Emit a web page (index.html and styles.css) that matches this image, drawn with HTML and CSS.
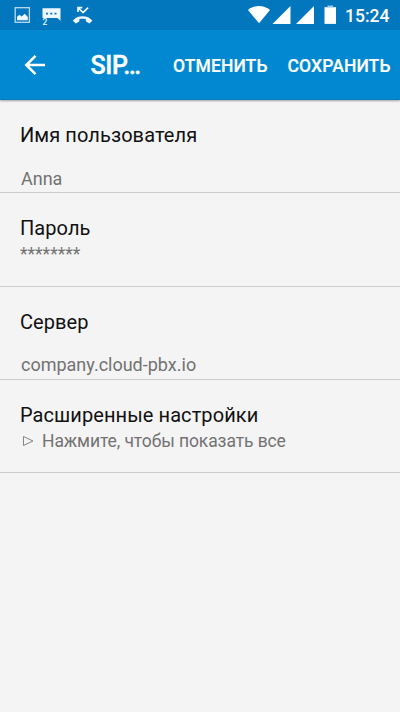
FILE: index.html
```html
<!DOCTYPE html>
<html lang="ru">
<head>
<meta charset="utf-8">
<title>SIP</title>
<link rel="stylesheet" href="styles.css">
</head>
<body>
<div class="statusbar">
  <svg class="notifications" width="110" height="30" viewBox="0 0 110 30" fill="#eef7fc">
    <rect x="15.200" y="7.700" width="14.200" height="14.600" fill="none" stroke="#b9dbf0" stroke-width="1.300"/>
    <path d="M17 20.300v-3.500l2.500-2 2.100 1.700 3.200-2.700 3 3.200v3.300z"/>
    <path fill-rule="evenodd" d="M42.500 8.200h18v12.500l-3.200-2.700H42.500zM46 12.800v1.800h1.900v-1.800zM50.300 12.800v1.800h1.900v-1.800zM54.600 12.800v1.800h1.900v-1.800z"/>
    <text x="42.500" y="25.200" class="badge">2</text>
    <path d="M72.800 20.700c2.500-2.900 5.700-4.400 9.800-4.400s7.300 1.500 9.800 4.400l-3 2.900-3.500-2v-2.300c-2.100-.6-4.500-.6-6.600 0v2.300l-3.500 2z"/>
    <path d="M78 12V7.700h4.300M78.300 8l4.800 4.600 5-5" fill="none" stroke="#eef7fc" stroke-width="1.700"/>
  </svg>
  <div class="system">
    <svg width="92" height="30" viewBox="0 0 92 30" fill="#fff">
      <path d="M0 10C6.500 4.700 15.500 4.700 22 10L11 23.300z"/>
      <path d="M42.500 6v18h-18z"/>
      <path d="M66 6v18H48z"/>
      <path d="M76.500 7.200H88v16.700H76.500z"/>
      <path fill="#9bcbea" d="M79.500 5.500h5.500v1.700h-5.500z"/>
    </svg>
    <span class="clock">15:24</span>
  </div>
</div>
<header class="appbar">
  <svg class="back" width="22" height="22" viewBox="0 0 22 22" fill="none" stroke="#fff" stroke-width="2.500"><path d="M21 11H3M11.500 1.800L2.300 11l9.200 9.200"/></svg>
  <h1 class="title">SIP…</h1>
  <span class="action cancel">ОТМЕНИТЬ</span>
  <span class="action">СОХРАНИТЬ</span>
</header>
<main class="settings">
  <section class="item">
    <div class="label">Имя пользователя</div>
    <div class="value field">Anna</div>
  </section>
  <section class="item">
    <div class="label">Пароль</div>
    <div class="value">********</div>
  </section>
  <section class="item">
    <div class="label lower">Сервер</div>
    <div class="value field">company.cloud-pbx.io</div>
  </section>
  <section class="item last">
    <div class="label">Расширенные настройки</div>
    <div class="value expand"><svg width="14" height="14" viewBox="0 0 14 14" fill="none" stroke="#858585" stroke-width="1"><path d="M1.500 2.500v9L11 7z"/></svg>Нажмите, чтобы показать все</div>
  </section>
</main>
</body>
</html>
```
FILE: styles.css
```css
* { box-sizing: border-box; }
body {
  margin: 0;
  width: 400px;
  height: 712px;
  overflow: hidden;
  background: #f4f4f4;
  font-family: Roboto, "Liberation Sans", sans-serif;
}
.statusbar {
  height: 30px;
  background: #0277bd;
  display: flex;
  justify-content: space-between;
}
.statusbar svg { display: block; }
.badge { font-size: 8.500px; font-weight: 500; }
.system { display: flex; width: 152px; }
.clock {
  margin-left: 5px;
  font-size: 17.500px;
  line-height: 32px;
  font-weight: 500;
  color: #fff;
}
.appbar {
  height: 70px;
  background: #0288d1;
  border-bottom: 1px solid #0a7dbe;
  box-shadow: 0 1px 2px rgba(0, 0, 0, 0.35);
  display: flex;
  align-items: center;
  color: #fff;
  white-space: nowrap;
}
.back { margin-left: 24px; }
.title {
  margin: 3px 0 0 44.500px;
  width: 82.500px;
  font-size: 25px;
  line-height: 30px;
  font-weight: 500;
  letter-spacing: -0.400px;
  -webkit-text-stroke: 0.400px #fff;
}
.action {
  font-size: 17.500px;
  font-weight: 500;
  line-height: 24px;
  margin-top: 2px;
  letter-spacing: 0.100px;
  -webkit-text-stroke: 0.200px #fff;
}
.cancel { margin-right: 20px; }
.item {
  height: 93.400px;
  padding: 22.500px 20px 0;
  border-bottom: 1px solid #cccccc;
}
.last { height: 92.700px; }
.label { font-size: 20px; line-height: 24px; color: #111; letter-spacing: 0.080px; }
.lower { padding-top: 1px; margin-bottom: -1px; }
.value { font-size: 17.500px; line-height: 22px; margin-top: 3px; color: #727272; }
.field { font-size: 18px; margin: 21px 0 0 1px; }
.expand { display: flex; align-items: center; letter-spacing: -0.100px; }
.expand svg { margin: 1px 6px 0 2px; }
```
